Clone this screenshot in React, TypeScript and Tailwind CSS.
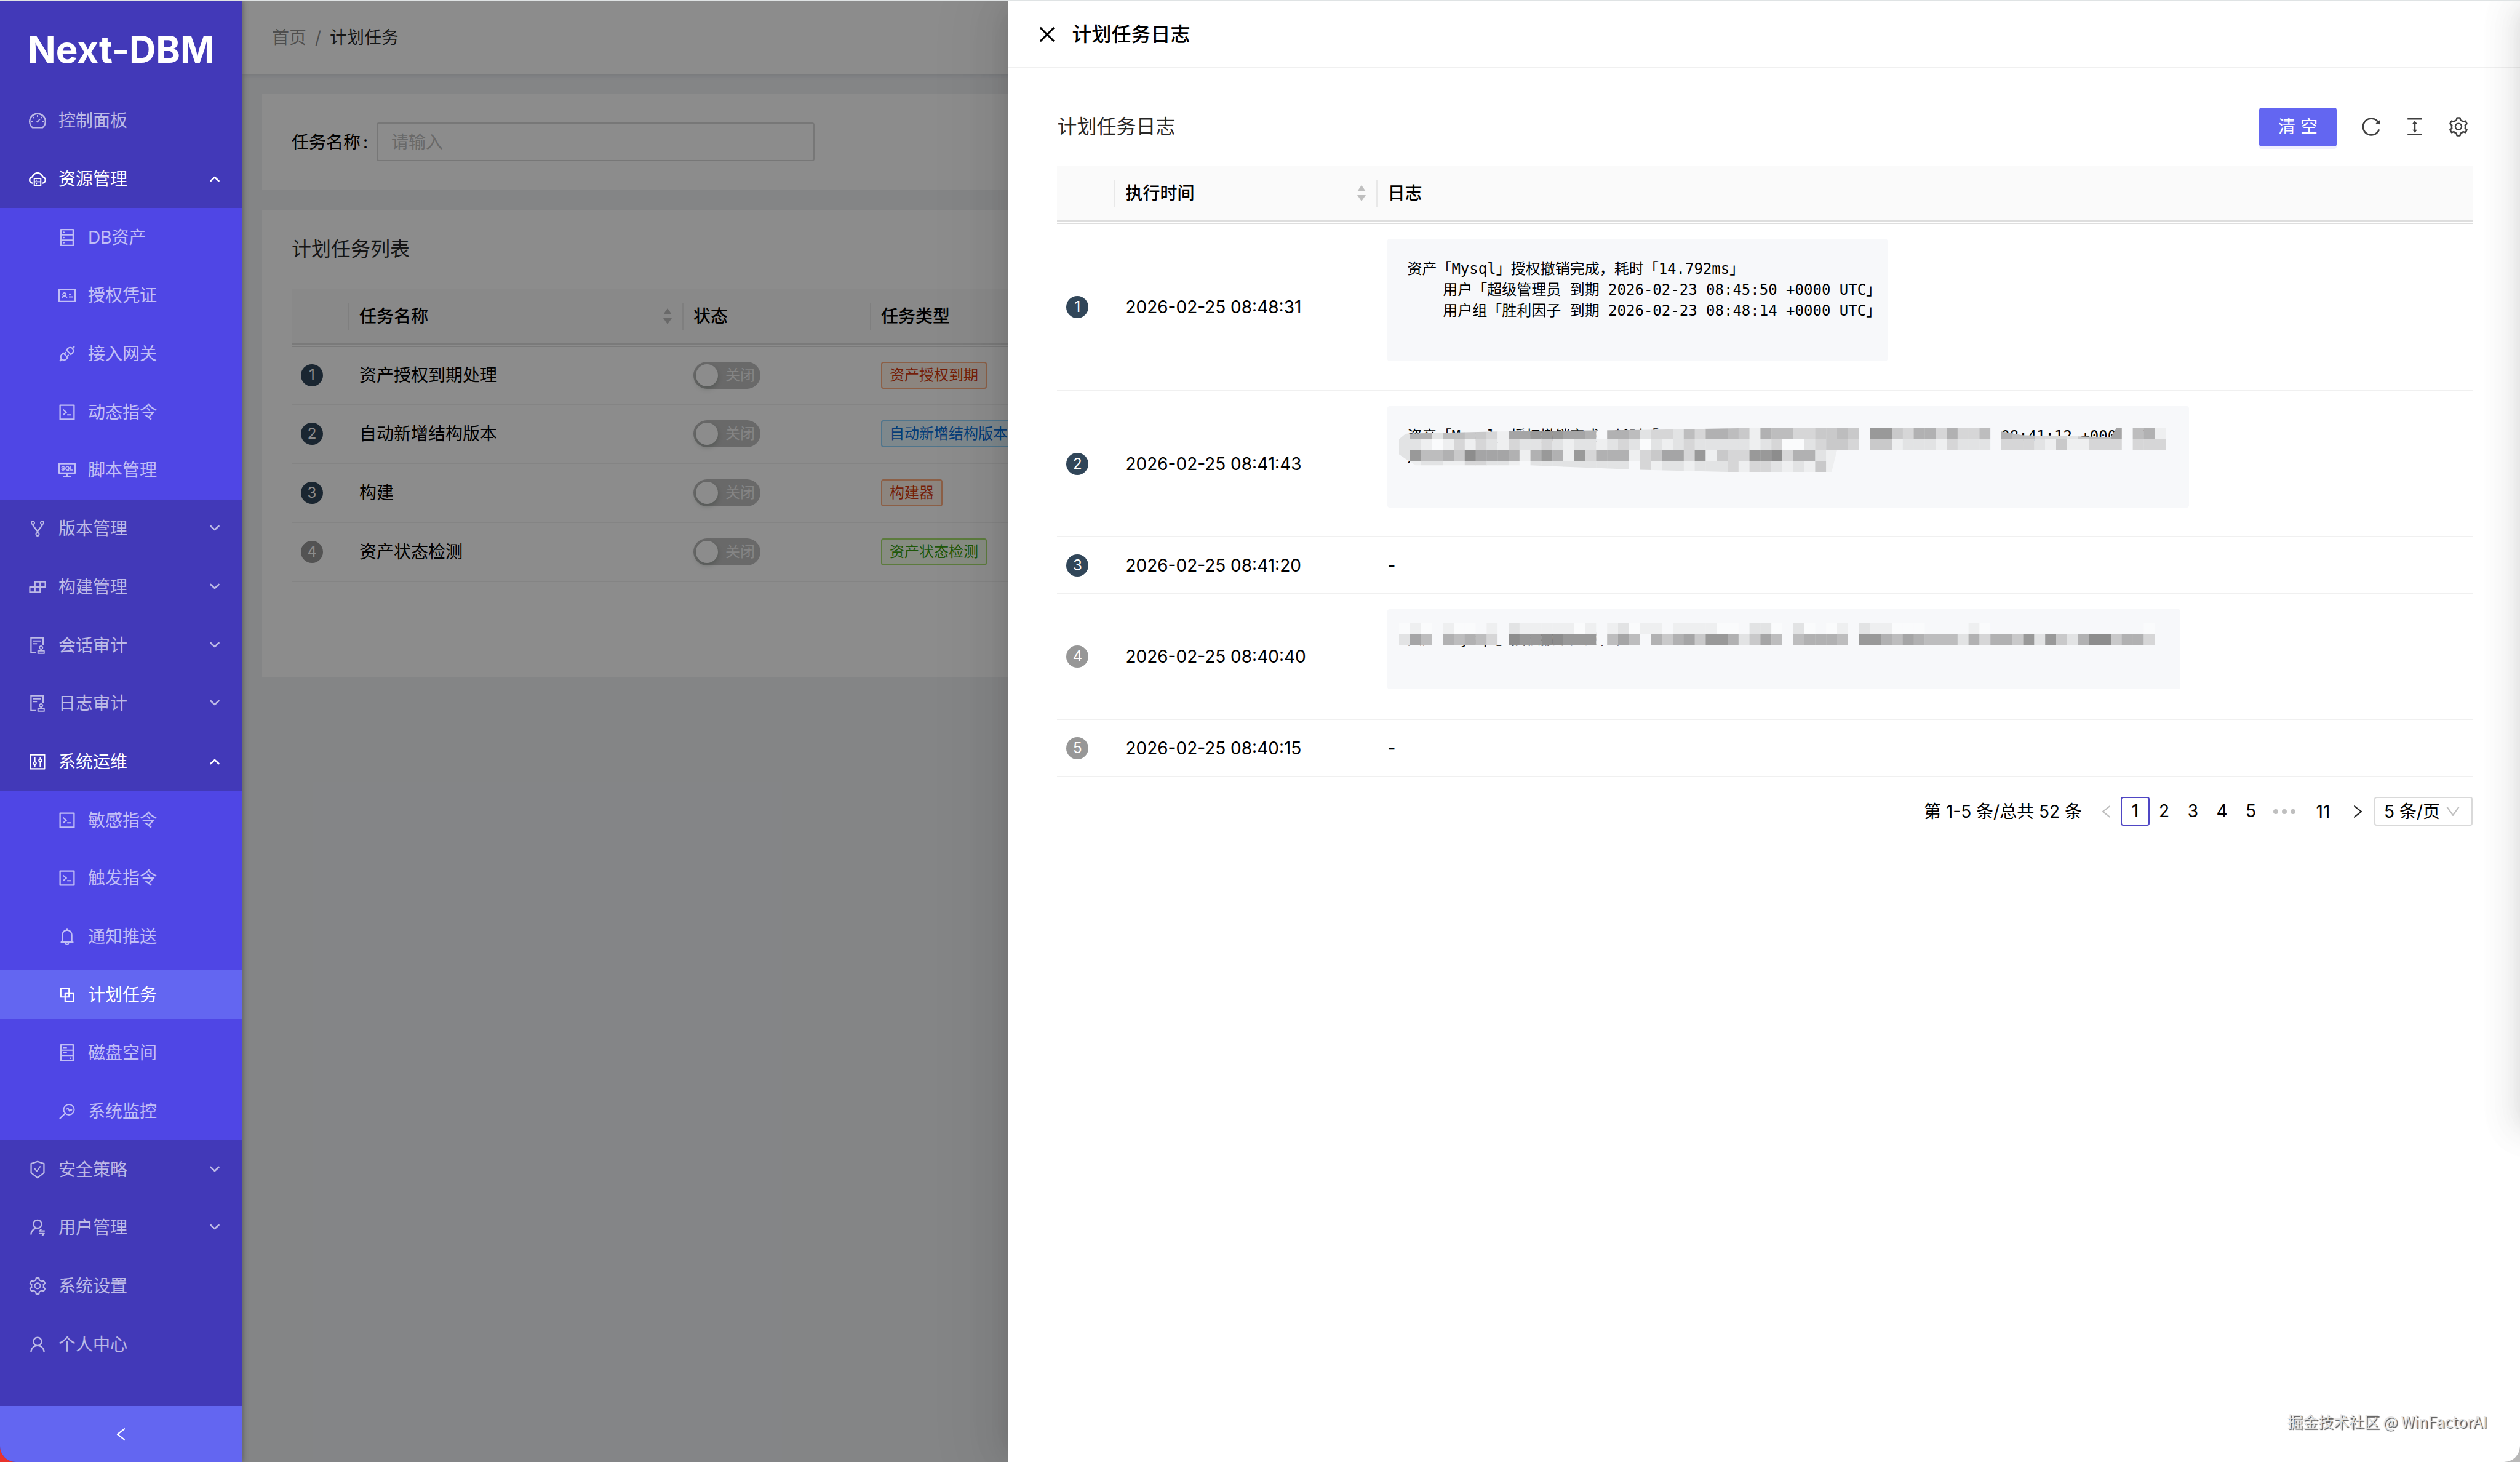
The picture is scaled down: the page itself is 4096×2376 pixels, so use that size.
import type { ReactNode } from "react";
import type { IconType } from "react-icons";
import {
  AiOutlineApi,
  AiOutlineAudit,
  AiOutlineBell,
  AiOutlineBlock,
  AiOutlineBuild,
  AiOutlineClose,
  AiOutlineCloudServer,
  AiOutlineCode,
  AiOutlineColumnHeight,
  AiOutlineConsoleSql,
  AiOutlineControl,
  AiOutlineDashboard,
  AiOutlineDatabase,
  AiOutlineDown,
  AiOutlineFork,
  AiOutlineHdd,
  AiOutlineIdcard,
  AiOutlineLeft,
  AiOutlineReload,
  AiOutlineRight,
  AiOutlineSafetyCertificate,
  AiOutlineSetting,
  AiOutlineUser,
  AiOutlineUserSwitch,
} from "react-icons/ai";

type IconProps = { className?: string };

function MonitorSearchIcon({ className }: IconProps) {
  return (
    <svg className={className} viewBox="-2 -2 32 32" fill="none" stroke="currentColor" strokeWidth={2}>
      <circle cx="17" cy="11.5" r="8.5" />
      <path d="M11 17.5L2 26" strokeWidth={2.4} />
      <path d="M12.5 11l3-2 2.5 4.5 2.5-2.5 1.5 1.5" strokeWidth={1.8} />
    </svg>
  );
}

type MenuItem = {
  label: string;
  icon: IconType | typeof MonitorSearchIcon;
  children?: MenuItem[];
  collapsed?: boolean;
  active?: boolean;
};

const menu: MenuItem[] = [
  { label: "控制面板", icon: AiOutlineDashboard },
  {
    label: "资源管理",
    icon: AiOutlineCloudServer,
    children: [
      { label: "DB资产", icon: AiOutlineDatabase },
      { label: "授权凭证", icon: AiOutlineIdcard },
      { label: "接入网关", icon: AiOutlineApi },
      { label: "动态指令", icon: AiOutlineCode },
      { label: "脚本管理", icon: AiOutlineConsoleSql },
    ],
  },
  { label: "版本管理", icon: AiOutlineFork, collapsed: true },
  { label: "构建管理", icon: AiOutlineBuild, collapsed: true },
  { label: "会话审计", icon: AiOutlineAudit, collapsed: true },
  { label: "日志审计", icon: AiOutlineAudit, collapsed: true },
  {
    label: "系统运维",
    icon: AiOutlineControl,
    children: [
      { label: "敏感指令", icon: AiOutlineCode },
      { label: "触发指令", icon: AiOutlineCode },
      { label: "通知推送", icon: AiOutlineBell },
      { label: "计划任务", icon: AiOutlineBlock, active: true },
      { label: "磁盘空间", icon: AiOutlineHdd },
      { label: "系统监控", icon: MonitorSearchIcon },
    ],
  },
  { label: "安全策略", icon: AiOutlineSafetyCertificate, collapsed: true },
  { label: "用户管理", icon: AiOutlineUserSwitch, collapsed: true },
  { label: "系统设置", icon: AiOutlineSetting },
  { label: "个人中心", icon: AiOutlineUser },
];

function MenuArrow({ open }: { open: boolean }) {
  return (
    <svg className="ml-auto h-4 w-4" viewBox="0 0 16 16" fill="none" stroke="currentColor" strokeWidth={2.6} strokeLinecap="round" strokeLinejoin="round">
      <path d={open ? "M1.5 11L8 5l6.5 6" : "M1.5 4L8 10l6.5-6"} />
    </svg>
  );
}

function MenuRow({ item, nested }: { item: MenuItem; nested?: boolean }) {
  const Icon = item.icon;
  const bright = item.children || item.active;
  return (
    <li className="flex min-h-0 flex-1">
      <button
        type="button"
        className={`my-2 flex w-full items-center pr-[37px] ${nested ? "pl-[93px]" : "pl-[45px]"} ${
          bright ? "text-white" : "text-white/65"
        } ${item.active ? "bg-[#6366f1]" : ""}`}
      >
        <Icon className="mr-[18px] h-8 w-8 shrink-0" />
        <span>{item.label}</span>
        {(item.children || item.collapsed) && <MenuArrow open={!!item.children} />}
      </button>
    </li>
  );
}

function Sidebar() {
  return (
    <aside className="z-10 flex w-[394px] shrink-0 flex-col bg-[#4239b8] shadow-[2px_0_8px_rgba(0,0,0,0.25)]">
      <h1 className="flex h-[147px] items-center justify-center pt-2 text-[60px] leading-[60px] font-bold text-white">
        Next-DBM
      </h1>
      <ul className="mb-[53px] flex min-h-0 flex-1 flex-col">
        {menu.map((item) =>
          item.children ? (
            <li key={item.label} className={`flex min-h-0 flex-col ${item.children.length === 5 ? "flex-[6]" : "flex-[7]"}`}>
              <ul className="flex min-h-0 flex-1 flex-col">
                <MenuRow item={item} />
              </ul>
              <ul className={`flex min-h-0 flex-col bg-[#4f46e5] ${item.children.length === 5 ? "flex-[5]" : "flex-[6]"}`}>
                {item.children.map((child) => (
                  <MenuRow key={child.label} item={child} nested />
                ))}
              </ul>
            </li>
          ) : (
            <MenuRow key={item.label} item={item} />
          )
        )}
      </ul>
      <button type="button" aria-label="收起" className="flex h-[91px] items-center justify-center bg-[#6366f1] text-white">
        <AiOutlineLeft className="h-7 w-7" />
      </button>
    </aside>
  );
}

function Sorter() {
  return (
    <svg className="ml-auto h-7 w-4" viewBox="0 0 16 28" fill="#bfbfbf">
      <path d="M8 1l7 10H1zM8 27L1 17h14z" />
    </svg>
  );
}

function HeadCell({ children, sortable, last }: { children?: ReactNode; sortable?: boolean; last?: boolean }) {
  return (
    <th className="h-[92px] p-0 text-left font-medium">
      <div className={`flex h-11 items-center pr-4 pl-4 ${last ? "" : "border-r-2 border-[#e8e8e8]"}`}>
        {children}
        {sortable && <Sorter />}
      </div>
    </th>
  );
}

function IndexBadge({ value }: { value: number }) {
  return (
    <span
      className={`ml-[15px] flex h-9 w-9 items-center justify-center rounded-full text-2xl text-white ${
        value > 3 ? "bg-[#979797]" : "bg-[#314659]"
      }`}
    >
      {value}
    </span>
  );
}

const tasks = [
  { name: "资产授权到期处理", tag: "资产授权到期", tagClass: "border-[#ffad80] bg-[#fff2e8] text-[#d4380d]" },
  { name: "自动新增结构版本", tag: "自动新增结构版本", tagClass: "border-[#91d5ff] bg-[#e6f7ff] text-[#096dd9]" },
  { name: "构建", tag: "构建器", tagClass: "border-[#ffad80] bg-[#fff2e8] text-[#d4380d]" },
  { name: "资产状态检测", tag: "资产状态检测", tagClass: "border-[#a8e070] bg-[#f6ffed] text-[#389e0d]" },
];

function TaskPage() {
  return (
    <>
      <header className="relative flex h-[118px] items-center bg-white pl-12 shadow-[0_2px_8px_rgba(0,21,41,0.12)]">
        <nav className="flex gap-[14px]">
          <a href="#" className="text-black/45">首页</a>
          <span className="text-black/45">/</span>
          <span className="text-black/85">计划任务</span>
        </nav>
      </header>
      <div className="flex flex-col gap-8 p-8">
        <form className="flex h-[157px] items-center bg-white px-12">
          <label htmlFor="task-name" className="w-[138px]">
            任务名称<span className="ml-1">:</span>
          </label>
          <input
            id="task-name"
            placeholder="请输入"
            className="h-[63px] w-[712px] rounded-sm border-2 border-[#d9d9d9] px-[22px] placeholder:text-[#bfbfbf]"
          />
        </form>
        <section className="min-h-[759px] bg-white px-12">
          <h2 className="flex h-32 items-center text-[32px] text-black/85">计划任务列表</h2>
          <table className="w-full table-fixed border-collapse">
            <colgroup>
              <col className="w-[94px]" />
              <col className="w-[543px]" />
              <col className="w-[305px]" />
              <col />
            </colgroup>
            <thead className="border-b-[6px] border-double border-[#dedede] bg-[#fafafa]">
              <tr>
                <HeadCell />
                <HeadCell sortable>任务名称</HeadCell>
                <HeadCell>状态</HeadCell>
                <HeadCell last>任务类型</HeadCell>
              </tr>
            </thead>
            <tbody>
              {tasks.map((task, i) => (
                <tr key={task.name} className="h-24 border-b-2 border-[#f0f0f0]">
                  <td>
                    <IndexBadge value={i + 1} />
                  </td>
                  <td className="px-4">{task.name}</td>
                  <td className="px-4">
                    <button
                      type="button"
                      role="switch"
                      aria-checked="false"
                      className="flex h-11 w-[109px] items-center gap-3 rounded-full bg-[#bfbfbf] pl-1 text-2xl text-white/80"
                    >
                      <span className="h-9 w-9 rounded-full bg-white shadow-[0_4px_8px_rgba(0,35,11,0.2)]" />
                      关闭
                    </button>
                  </td>
                  <td className="px-4">
                    <span className={`flex h-11 w-fit items-center rounded-sm border-2 px-3 text-2xl whitespace-nowrap ${task.tagClass}`}>
                      {task.tag}
                    </span>
                  </td>
                </tr>
              ))}
            </tbody>
          </table>
        </section>
      </div>
    </>
  );
}

const shades = ["#fafbfc", "#eeeff0", "#e2e3e4", "#d6d6d7", "#c9c9ca", "#bdbdbe", "#b1b1b2", "#a5a5a6", "#999999", "#8d8d8d"];

// each digit is one block, higher is darker
function Mosaic({ rows, clip, className }: { rows: string[]; clip?: string; className: string }) {
  const body = rows.flatMap((row, y) =>
    row.split("").map((shade, x) => (
      <rect
        key={`${x}-${y}`}
        x={x}
        y={y}
        width={1.02}
        height={1.02}
        fill={shade === "." ? "#f7f8fa" : shades[Number(shade)]}
      />
    ))
  );
  return (
    <svg className={className} viewBox={`0 0 70 ${rows.length}`} preserveAspectRatio="none">
      {clip && (
        <clipPath id="mosaic-edge">
          <polygon points={clip} />
        </clipPath>
      )}
      <g clipPath={clip ? "url(#mosaic-edge)" : undefined}>{body}</g>
    </svg>
  );
}

function LogBlock({ className, children }: { className: string; children: ReactNode }) {
  return (
    <div className={`relative rounded-sm bg-[#f7f8fa] pt-8 pl-8 font-['DejaVu_Sans_Mono','Noto_Sans_CJK_SC',monospace] text-2xl leading-[34px] ${className}`}>
      {children}
    </div>
  );
}

const logs: { time: string; rowClass: string; content: ReactNode }[] = [
  {
    time: "2026-02-25 08:48:31",
    rowClass: "h-[274px]",
    content: (
      <LogBlock className="h-[199px] w-[813px]">
        <pre className="font-[inherit]">
          {"资产「Mysql」授权撤销完成，耗时「14.792ms」\n    用户「超级管理员 到期 2026-02-23 08:45:50 +0000 UTC」\n    用户组「胜利因子 到期 2026-02-23 08:48:14 +0000 UTC」"}
        </pre>
      </LogBlock>
    ),
  },
  {
    time: "2026-02-25 08:41:43",
    rowClass: "h-[237px]",
    content: (
      <LogBlock className="h-[165px] w-[1303px]">
        <div className="flex justify-between pr-[46px]">
          <span>资产「Mysql」授权撤销完成，耗时「</span>
          <span>08:41:12 +0000 UTC</span>
        </div>
        <p>用户组</p>
        <Mosaic
          className="absolute top-9 left-[19px] h-[71px] w-[1246px]"
          clip="0,1 0.6,0.5 9,0.3 22,0.15 31,0 54,0 55,0.3 57,0.65 65,0.8 65.5,0 70,0 70,2 40,2 39.5,4 30,4 22,3.8 12,3.4 1.5,3.4 0,2.4"
          rows={[
            "266255443177888776.66523325366541655334454.88436636335.65533324557.561",
            "221013132132232122123202123222221230023443.44122213222.33321411333.333",
            "2855649777616861836661347738143388936621..............................",
            ".1221133221.222222222.312212223133212141..............................",
          ]}
        />
      </LogBlock>
    ),
  },
  { time: "2026-02-25 08:41:20", rowClass: "h-[93px]", content: "-" },
  {
    time: "2026-02-25 08:40:40",
    rowClass: "h-[204px]",
    content: (
      <LogBlock className="h-[130px] w-[1289px]">
        <p>资产「Mysql」授权撤销完成，耗时「</p>
        <Mosaic
          className="absolute top-[22px] left-[19px] h-9 w-[1246px]"
          rows={[
            "010.100.1.21111101.12011.111100.220.20.01.211000....10..............0.",
            "275.65653.98899888.575.646748862475.56665.886576555263664828426994663.",
          ]}
        />
      </LogBlock>
    ),
  },
  { time: "2026-02-25 08:40:15", rowClass: "h-[93px]", content: "-" },
];

function PageButton({ children, current }: { children: ReactNode; current?: boolean }) {
  return (
    <button
      type="button"
      aria-current={current ? "page" : undefined}
      className={`h-[47px] w-[47px] rounded-sm leading-[43px] ${current ? "border-2 border-[#4f46c4]" : ""}`}
    >
      {children}
    </button>
  );
}

function Pagination() {
  return (
    <div className="mt-8 flex items-center justify-end">
      <span className="mr-4">第 1-5 条/总共 52 条</span>
      <button type="button" aria-label="上一页" disabled className="flex w-[47px] justify-center text-black/25">
        <AiOutlineLeft className="h-7 w-7" />
      </button>
      <PageButton current>1</PageButton>
      <PageButton>2</PageButton>
      <PageButton>3</PageButton>
      <PageButton>4</PageButton>
      <PageButton>5</PageButton>
      <span className="flex w-[62px] justify-center gap-1.5">
        <i className="h-2 w-2 rounded-full bg-black/25" />
        <i className="h-2 w-2 rounded-full bg-black/25" />
        <i className="h-2 w-2 rounded-full bg-black/25" />
      </span>
      <button type="button" className="w-16">11</button>
      <button type="button" aria-label="下一页" className="flex w-[47px] justify-center text-black/85">
        <AiOutlineRight className="h-7 w-7" />
      </button>
      <div className="relative ml-1">
        <select aria-label="每页条数" className="h-[47px] w-40 appearance-none rounded-sm border-2 border-[#d9d9d9] pl-[14px]">
          <option>5 条/页</option>
        </select>
        <AiOutlineDown className="pointer-events-none absolute top-2.5 right-[18px] h-7 w-7 text-black/25" />
      </div>
    </div>
  );
}

function LogDrawer() {
  return (
    <div
      role="dialog"
      aria-labelledby="drawer-title"
      className="absolute inset-y-0 right-0 z-20 w-3/5 bg-white shadow-[-12px_0_32px_-16px_rgba(0,0,0,0.1),-18px_0_56px_rgba(0,0,0,0.06),-24px_0_96px_32px_rgba(0,0,0,0.03)]"
    >
      <header className="flex h-[109px] items-center gap-[22px] border-b-2 border-[#f0f0f0] pl-[46px]">
        <button type="button" aria-label="关闭">
          <AiOutlineClose className="h-9 w-9" />
        </button>
        <h2 id="drawer-title" className="text-[32px] font-medium">计划任务日志</h2>
      </header>
      <div className="pr-[77px] pl-20">
        <div className="flex h-[158px] items-center pt-8">
          <h3 className="text-[32px] text-black/85">计划任务日志</h3>
          <div className="mr-[5px] ml-auto flex items-center gap-[35px] text-black/75">
            <button type="button" className="mr-[3px] h-[63px] w-[126px] rounded-sm bg-[#6366f1] text-white shadow-[0_4px_0_rgba(99,102,241,0.1)]">
              清 空
            </button>
            <button type="button" aria-label="刷新">
              <AiOutlineReload className="h-9 w-9" />
            </button>
            <button type="button" aria-label="密度">
              <AiOutlineColumnHeight className="h-9 w-9" />
            </button>
            <button type="button" aria-label="列设置">
              <AiOutlineSetting className="h-9 w-9" />
            </button>
          </div>
        </div>
        <table className="w-full table-fixed border-collapse">
          <colgroup>
            <col className="w-[95px]" />
            <col className="w-[426px]" />
            <col />
          </colgroup>
          <thead className="border-b-[6px] border-double border-[#dedede] bg-[#fafafa]">
            <tr>
              <HeadCell />
              <HeadCell sortable>执行时间</HeadCell>
              <HeadCell last>日志</HeadCell>
            </tr>
          </thead>
          <tbody>
            {logs.map((log, i) => (
              <tr key={log.time} className={`border-b-2 border-[#f0f0f0] ${log.rowClass}`}>
                <td>
                  <IndexBadge value={i + 1} />
                </td>
                <td className="px-4">{log.time}</td>
                <td className={`px-4 ${log.content === "-" ? "" : "pt-6 align-top"}`}>{log.content}</td>
              </tr>
            ))}
          </tbody>
        </table>
        <Pagination />
      </div>
      <div className="absolute top-0 left-full h-[1840px] w-24 shadow-[-12px_0_32px_-16px_rgba(0,0,0,0.08),-18px_0_56px_rgba(0,0,0,0.06),-12px_0_64px_8px_rgba(0,0,0,0.03)]" />
      <p className="absolute right-[54px] bottom-[49px] font-['Noto_Sans_CJK_SC',sans-serif] text-[25px] leading-9 text-[#e4e4e4] [text-shadow:2px_2px_1px_#555]">
        掘金技术社区 @ WinFactorAI
      </p>
    </div>
  );
}

export default function App() {
  return (
    <div className="h-screen bg-linear-to-r from-[#e8322c] from-50% to-[#b8b8b8] to-50%">
      <div className="relative flex h-full overflow-hidden rounded-b-[26px] border-t-2 border-[#dfe3e4] font-['Inter','Noto_Sans_CJK_SC',sans-serif] text-[28px] leading-[44px] text-black">
        <Sidebar />
        <main className="relative min-w-0 flex-1 overflow-hidden bg-[#f0f2f5]">
          <TaskPage />
          <div className="absolute inset-0 bg-black/45" />
        </main>
        <LogDrawer />
      </div>
    </div>
  );
}
